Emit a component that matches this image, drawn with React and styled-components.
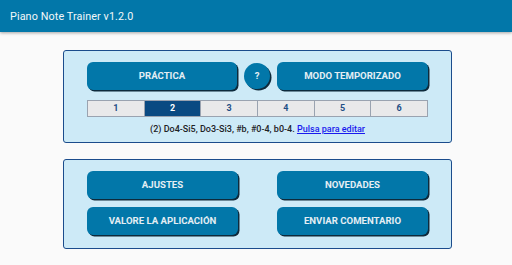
import React, { useState } from "react";
import styled, { createGlobalStyle } from "styled-components";

const Global = createGlobalStyle`
  html, body { margin: 0; padding: 0; background: #fafafa; font-family: Roboto, "Noto Sans", sans-serif; }
  * { box-sizing: border-box; }
`;

const Page = styled.div`
  width: 512px;
  height: 265px;
  background: #fafafa;
  overflow: hidden;
`;

const Header = styled.header`
  height: 32px;
  background: #0277a9;
  display: flex;
  align-items: center;
  padding-left: 10px;
  color: #f2f7fa;
  font-size: 10.8px;
  font-weight: 400;
  letter-spacing: 0.1px;
  box-shadow: 0 1px 3px rgba(0, 0, 0, 0.35);
`;

const Panel = styled.section`
  margin: ${(p) => p.$top}px 0 0 63px;
  width: 389px;
  height: ${(p) => p.$h}px;
  background: #cdeaf7;
  border: 1.5px solid #1b4c8c;
  border-radius: 3px;
  padding: ${(p) => p.$pt}px 23px 0 23px;
  display: flex;
  flex-direction: column;
  gap: ${(p) => p.$gap}px;
`;

const Row = styled.div`
  display: flex;
  align-items: center;
  gap: ${(p) => p.$gap}px;
`;

const Button = styled.button`
  width: ${(p) => p.$w}px;
  height: 28px;
  border: none;
  border-radius: 6px;
  background: #0277a9;
  color: #e4eef4;
  font-family: Roboto, sans-serif;
  font-weight: 700;
  font-size: 9.6px;
  box-shadow: 1.5px 1.5px 0 #0d2a3c;
  padding: 0;
  cursor: pointer;
`;

const Round = styled.button`
  width: 26px;
  height: 26px;
  border-radius: 50%;
  border: none;
  background: #0277a9;
  color: #e4eef4;
  font-weight: 700;
  font-size: 9.5px;
  font-family: Roboto, sans-serif;
  box-shadow: 1.5px 1.5px 0 #0d2a3c;
  padding: 0;
`;

const Segments = styled.div`
  margin-top: 10px;
  display: flex;
  width: 341px;
  height: 17px;
  border: 1px solid #9aa3b0;
  background: #e9e9ea;
`;

const Seg = styled.div`
  flex: 1;
  display: flex;
  align-items: center;
  justify-content: center;
  font-size: 9px;
  font-weight: 700;
  color: ${(p) => (p.$on ? "#ffffff" : "#1f4f86")};
  background: ${(p) => (p.$on ? "#0a4a82" : "transparent")};
  border-left: ${(p) => (p.$first ? "none" : "1px solid #9aa3b0")};
`;

const Info = styled.div`
  margin-top: 7px;
  text-align: center;
  font-size: 9px;
  font-weight: 500;
  color: #1d2226;
`;

const Link = styled.a`
  color: #1a1aee;
  text-decoration: underline;
`;

export default function App() {
  const [sel, setSel] = useState(2);
  return (
    <Page>
      <Global />
      <Header>Piano Note Trainer v1.2.0</Header>
      <Panel $top={18} $h={93} $pt={10.5} $gap={0}>
        <Row $gap={7}>
          <Button $w={150}>PRÁCTICA</Button>
          <Round>?</Round>
          <Button $w={151}>MODO TEMPORIZADO</Button>
        </Row>
        <Segments>
          {[1, 2, 3, 4, 5, 6].map((n) => (
            <Seg key={n} $on={n === sel} $first={n === 1} onClick={() => setSel(n)}>
              {n}
            </Seg>
          ))}
        </Segments>
        <Info>
          (2) Do4-Si5, Do3-Si3, #b, #0-4, b0-4. <Link href="#">Pulsa para editar</Link>
        </Info>
      </Panel>
      <Panel $top={16} $h={90} $pt={10.5} $gap={8}>
        <Row $gap={39}>
          <Button $w={151}>AJUSTES</Button>
          <Button $w={151}>NOVEDADES</Button>
        </Row>
        <Row $gap={39}>
          <Button $w={151}>VALORE LA APLICACIÓN</Button>
          <Button $w={151}>ENVIAR COMENTARIO</Button>
        </Row>
      </Panel>
    </Page>
  );
}
